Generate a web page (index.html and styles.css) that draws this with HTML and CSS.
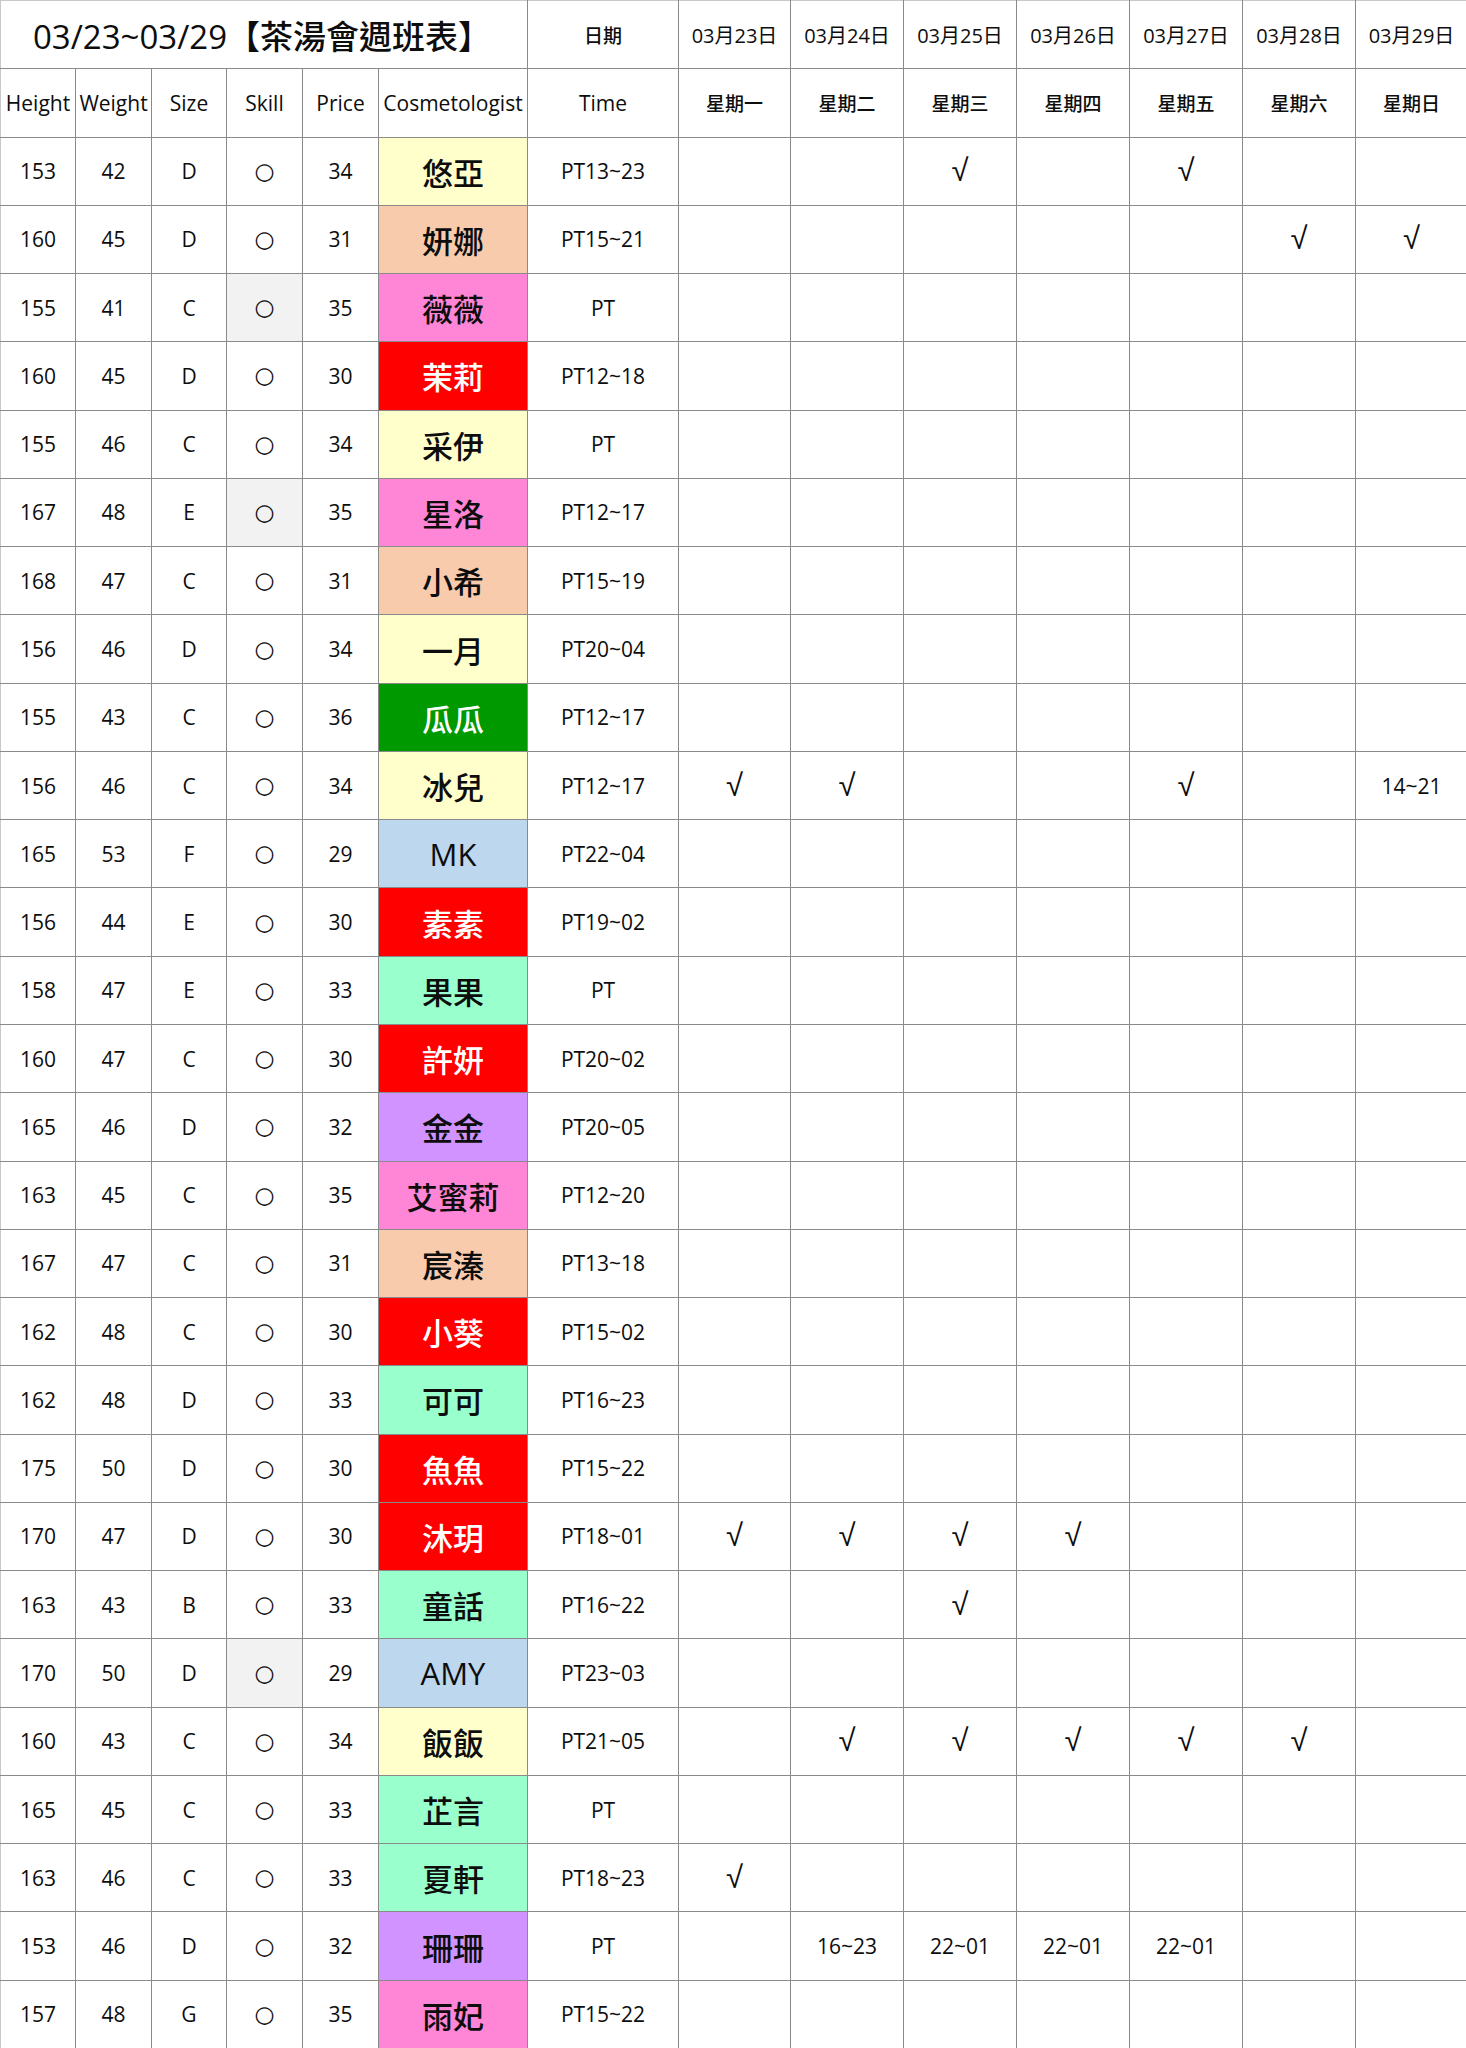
FILE: index.html
```html
<!DOCTYPE html>
<html lang="zh-Hant">
<head>
<meta charset="utf-8">
<title>茶湯會週班表</title>
<link rel="stylesheet" href="styles.css">
</head>
<body>
<table class="sheet">
<colgroup>
<col class="w75"><col class="w76"><col class="w75"><col class="w76"><col class="w76"><col class="w149"><col class="w151">
<col class="w112"><col class="w113"><col class="w113"><col class="w113"><col class="w113"><col class="w113"><col class="w112">
</colgroup>
<thead>
<tr>
<th colspan="6" class="title">03/23~03/29【茶湯會週班表】</th>
<th class="small">日期</th>
<th class="date">03月23日</th><th class="date">03月24日</th><th class="date">03月25日</th><th class="date">03月26日</th><th class="date">03月27日</th><th class="date">03月28日</th><th class="date">03月29日</th>
</tr>
<tr>
<th class="col">Height</th><th class="col">Weight</th><th class="col">Size</th><th class="col">Skill</th><th class="col">Price</th><th class="col">Cosmetologist</th><th class="col">Time</th>
<th class="small">星期一</th><th class="small">星期二</th><th class="small">星期三</th><th class="small">星期四</th><th class="small">星期五</th><th class="small">星期六</th><th class="small">星期日</th>
</tr>
</thead>
<tbody id="rows"></tbody>
</table>
<script src="app.js"></script>
</body>
</html>
```
FILE: styles.css
```css
html, body {
  margin: 0;
  padding: 0;
  background: #ffffff;
}
body {
  font-family: "Open Sans", "Noto Sans CJK TC", sans-serif;
  color: #0d0d0d;
}
.sheet {
  border-collapse: collapse;
  table-layout: fixed;
  width: 1466px;
}
.w75 { width: 75px; }
.w76 { width: 76px; }
.w112 { width: 112px; }
.w113 { width: 113px; }
.w149 { width: 149px; }
.w151 { width: 151px; }
.sheet th, .sheet td {
  border: 1px solid #8a8a8a;
  height: 67.27px;
  padding: 0;
  text-align: center;
  vertical-align: middle;
  font-weight: 400;
  font-size: 21px;
  white-space: nowrap;
  overflow: hidden;
}
.sheet tr:first-child th { border-top-color: #c8c8c8; }
.sheet th:first-child, .sheet td:first-child { border-left-color: #c8c8c8; }
.sheet .title {
  font-size: 33px;
  font-weight: 500;
  padding-right: 4px;
}
.sheet .small {
  font-size: 19px;
  font-family: "Noto Sans CJK TC", sans-serif;
  font-weight: 500;
}
.sheet .date {
  font-size: 20px;
}
.sheet .skill {
  font-family: "DejaVu Sans", sans-serif;
  font-size: 23px;
  font-weight: 700;
  line-height: 1;
}
.sheet .skill.grey { background: #f2f2f2; }
.sheet .name {
  font-family: "Open Sans", "Noto Sans CJK TC", sans-serif;
  font-size: 31px;
  font-weight: 500;
}
.sheet .check {
  font-family: "Liberation Sans", sans-serif;
  font-size: 31px;
}
.c-yellow { background: #ffffcc; }
.c-peach { background: #f8cbad; }
.c-pink { background: #ff85d6; }
.c-red { background: #ff0000; color: #ffffff; }
.c-green { background: #009900; color: #ffffff; }
.c-blue { background: #bdd7ee; }
.c-mint { background: #99ffcc; }
.c-lav { background: #d093ff; }
```
FILE: app.js
```js
var data = [
  [153,42,'D',0,34,'悠亞','yellow','PT13~23',{2:'√',4:'√'}],
  [160,45,'D',0,31,'妍娜','peach','PT15~21',{5:'√',6:'√'}],
  [155,41,'C',1,35,'薇薇','pink','PT',{}],
  [160,45,'D',0,30,'茉莉','red','PT12~18',{}],
  [155,46,'C',0,34,'采伊','yellow','PT',{}],
  [167,48,'E',1,35,'星洛','pink','PT12~17',{}],
  [168,47,'C',0,31,'小希','peach','PT15~19',{}],
  [156,46,'D',0,34,'一月','yellow','PT20~04',{}],
  [155,43,'C',0,36,'瓜瓜','green','PT12~17',{}],
  [156,46,'C',0,34,'冰兒','yellow','PT12~17',{0:'√',1:'√',4:'√',6:'14~21'}],
  [165,53,'F',0,29,'MK','blue','PT22~04',{}],
  [156,44,'E',0,30,'素素','red','PT19~02',{}],
  [158,47,'E',0,33,'果果','mint','PT',{}],
  [160,47,'C',0,30,'許妍','red','PT20~02',{}],
  [165,46,'D',0,32,'金金','lav','PT20~05',{}],
  [163,45,'C',0,35,'艾蜜莉','pink','PT12~20',{}],
  [167,47,'C',0,31,'宸溱','peach','PT13~18',{}],
  [162,48,'C',0,30,'小葵','red','PT15~02',{}],
  [162,48,'D',0,33,'可可','mint','PT16~23',{}],
  [175,50,'D',0,30,'魚魚','red','PT15~22',{}],
  [170,47,'D',0,30,'沐玥','red','PT18~01',{0:'√',1:'√',2:'√',3:'√'}],
  [163,43,'B',0,33,'童話','mint','PT16~22',{2:'√'}],
  [170,50,'D',1,29,'AMY','blue','PT23~03',{}],
  [160,43,'C',0,34,'飯飯','yellow','PT21~05',{1:'√',2:'√',3:'√',4:'√',5:'√'}],
  [165,45,'C',0,33,'芷言','mint','PT',{}],
  [163,46,'C',0,33,'夏軒','mint','PT18~23',{0:'√'}],
  [153,46,'D',0,32,'珊珊','lav','PT',{1:'16~23',2:'22~01',3:'22~01',4:'22~01'}],
  [157,48,'G',0,35,'雨妃','pink','PT15~22',{}]
];
var tbody = document.getElementById('rows');
data.forEach(function (r) {
  var tr = document.createElement('tr');
  function cell(text, cls) {
    var td = document.createElement('td');
    td.textContent = text;
    if (cls) td.className = cls;
    tr.appendChild(td);
  }
  cell(r[0]); cell(r[1]); cell(r[2]);
  cell('○', r[3] ? 'skill grey' : 'skill');
  cell(r[4]);
  cell(r[5], 'name c-' + r[6]);
  cell(r[7]);
  for (var i = 0; i < 7; i++) {
    var v = r[8][i] || '';
    cell(v, v === '√' ? 'check' : '');
  }
  tbody.appendChild(tr);
});
```
